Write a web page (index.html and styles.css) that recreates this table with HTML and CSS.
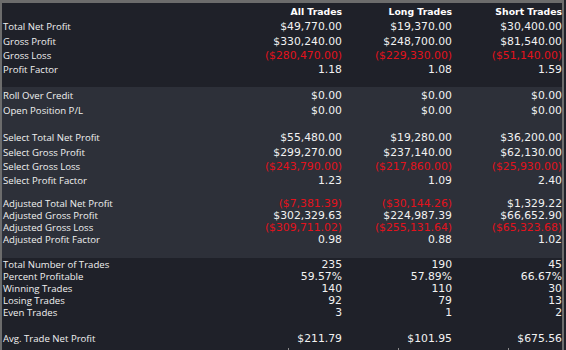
FILE: index.html
```html
<!DOCTYPE html>
<html>
<head>
<meta charset="utf-8">
<link rel="stylesheet" href="styles.css">
</head>
<body>
<div class="panel">
  <section class="sec sec-top">
    <div class="row head"><span></span><span>All Trades</span><span>Long Trades</span><span>Short Trades</span></div>
    <div class="row h15"><span class="lbl">Total Net Profit</span><span>$49,770.00</span><span>$19,370.00</span><span>$30,400.00</span></div>
    <div class="row h15"><span class="lbl">Gross Profit</span><span>$330,240.00</span><span>$248,700.00</span><span>$81,540.00</span></div>
    <div class="row h14"><span class="lbl">Gross Loss</span><span class="neg">($280,470.00)</span><span class="neg">($229,330.00)</span><span class="neg">($51,140.00)</span></div>
    <div class="row h13"><span class="lbl">Profit Factor</span><span>1.18</span><span>1.08</span><span>1.59</span></div>
  </section>
  <section class="sec sec-band">
    <div class="row h15"><span class="lbl">Roll Over Credit</span><span>$0.00</span><span>$0.00</span><span>$0.00</span></div>
    <div class="row h15"><span class="lbl">Open Position P/L</span><span>$0.00</span><span>$0.00</span><span>$0.00</span></div>
    <div class="gap g12"></div>
    <div class="row h15"><span class="lbl">Select Total Net Profit</span><span>$55,480.00</span><span>$19,280.00</span><span>$36,200.00</span></div>
    <div class="row h15"><span class="lbl">Select Gross Profit</span><span>$299,270.00</span><span>$237,140.00</span><span>$62,130.00</span></div>
    <div class="row h14"><span class="lbl">Select Gross Loss</span><span class="neg">($243,790.00)</span><span class="neg">($217,860.00)</span><span class="neg">($25,930.00)</span></div>
    <div class="row h13"><span class="lbl">Select Profit Factor</span><span>1.23</span><span>1.09</span><span>2.40</span></div>
    <div class="gap g11"></div>
    <div class="row h12"><span class="lbl">Adjusted Total Net Profit</span><span class="neg">($7,381.39)</span><span class="neg">($30,144.26)</span><span>$1,329.22</span></div>
    <div class="row h12"><span class="lbl">Adjusted Gross Profit</span><span>$302,329.63</span><span>$224,987.39</span><span>$66,652.90</span></div>
    <div class="row h12"><span class="lbl">Adjusted Gross Loss</span><span class="neg">($309,711.02)</span><span class="neg">($255,131.64)</span><span class="neg">($65,323.68)</span></div>
    <div class="row h12"><span class="lbl">Adjusted Profit Factor</span><span>0.98</span><span>0.88</span><span>1.02</span></div>
  </section>
  <section class="sec sec-bottom">
    <div class="row h12"><span class="lbl">Total Number of Trades</span><span>235</span><span>190</span><span>45</span></div>
    <div class="row h12"><span class="lbl">Percent Profitable</span><span>59.57%</span><span>57.89%</span><span>66.67%</span></div>
    <div class="row h12"><span class="lbl">Winning Trades</span><span>140</span><span>110</span><span>30</span></div>
    <div class="row h12"><span class="lbl">Losing Trades</span><span>92</span><span>79</span><span>13</span></div>
    <div class="row h12"><span class="lbl">Even Trades</span><span>3</span><span>1</span><span>2</span></div>
    <div class="gap g14"></div>
    <div class="row h12"><span class="lbl">Avg. Trade Net Profit</span><span>$211.79</span><span>$101.95</span><span>$675.56</span></div>
    <div class="ticks"><span></span><span class="tick"></span><span class="tick"></span><span class="tick"></span></div>
  </section>
</div>
</body>
</html>
```
FILE: styles.css
```css
html, body {
  margin: 0;
  padding: 0;
  background: #1f2129;
  height: 100%;
  overflow: hidden;
}
.panel {
  width: 560px;
  border-top: 3px solid #6c6c6c;
  border-left: 2px solid #6c6c6c;
  border-right: 2px solid #6c6c6c;
  height: 347px;
  background: #1f2129;
}
.sec-top {
  padding-bottom: 11px;
}
.sec-band {
  background: #2d3039;
  padding-top: 1px;
  padding-bottom: 12px;
}
.sec-bottom {
  padding-top: 1px;
}
.row {
  display: grid;
  grid-template-columns: 230px 110px 110px 110px;
  font-family: "DejaVu Sans", Verdana, sans-serif;
  font-size: 10.8px;
  color: #f2f2f2;
  white-space: nowrap;
}
.row > span {
  text-align: right;
}
.row > .lbl {
  text-align: left;
  padding-left: 1px;
  font-family: "Open Sans", "Noto Sans", sans-serif;
  font-size: 9.6px;
  color: #f0f0f0;
}
.row.head {
  font-weight: bold;
  font-size: 9.3px;
  color: #ffffff;
  height: 15px;
  line-height: 15px;
  padding-top: 1px;
}
.neg {
  color: #e3121c;
}
.h15 { height: 15px; line-height: 15px; }
.h14 { height: 14px; line-height: 14px; }
.h13 { height: 13px; line-height: 13px; }
.h12 { height: 12px; line-height: 12px; }
.g11 { height: 11px; }
.g12 { height: 12px; }
.g14 { height: 14px; }
.ticks {
  display: grid;
  grid-template-columns: 230px 110px 110px 110px;
  height: 2px;
  margin-top: 3px;
}
.tick {
  width: 1px;
  height: 2px;
  background: #8a8a8a;
  justify-self: center;
  margin-left: 2px;
}
```
